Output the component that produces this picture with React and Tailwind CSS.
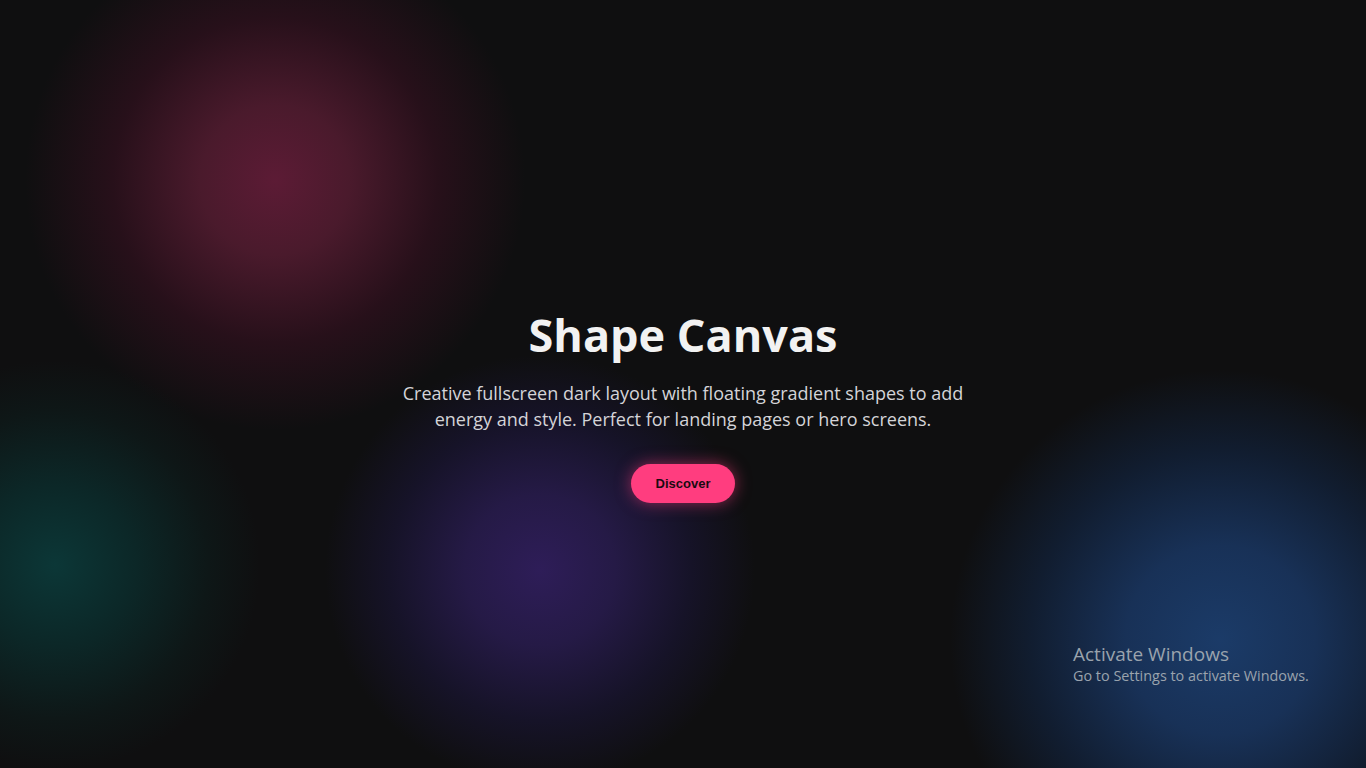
export default function App() {
  return (
    <div className="relative w-full h-screen overflow-hidden bg-[#0f0f10] font-['Open_Sans','Noto_Sans',sans-serif]">
      {/* floating gradient shapes */}
      <div className="absolute left-[25px] top-[-70px] w-[500px] h-[500px] rounded-full bg-[radial-gradient(circle_closest-side,#5c1b35_0%,#4a1a2c_30%,#27101a_65%,transparent_100%)]" />
      <div className="absolute left-[-150px] top-[360px] w-[410px] h-[410px] rounded-full bg-[radial-gradient(circle_closest-side,#0c3737_0%,#0c2727_40%,#0e1717_75%,transparent_100%)]" />
      <div className="absolute left-[325px] top-[355px] w-[430px] h-[430px] rounded-full bg-[radial-gradient(circle_closest-side,#2e1d58_0%,#251a46_35%,#161328_70%,transparent_100%)]" />
      <div className="absolute left-[950px] top-[370px] w-[540px] h-[540px] rounded-full bg-[radial-gradient(circle_closest-side,#1b3b68_0%,#183157_35%,#111d30_70%,transparent_100%)]" />

      <main className="relative flex flex-col items-center pt-[305px] text-center">
        <h1 className="text-[45px] leading-[60px] font-bold text-[#f2f2f2]">Shape Canvas</h1>
        <p className="mt-[15px] w-[580px] text-[18px] leading-[26px] text-[#d4d4d8]">
          Creative fullscreen dark layout with floating gradient shapes to add energy and style. Perfect for landing pages or hero screens.
        </p>
        <button className="mt-[32px] h-[39px] w-[104px] rounded-full bg-[#ff3d7f] text-[13px] font-bold text-[#1a0a10] font-['Liberation_Sans',Arial,sans-serif] shadow-[0_0_16px_rgba(255,61,127,0.55)]">
          Discover
        </button>
      </main>

      <div className="absolute left-[1073px] top-[642px] text-[#9aa3ad]">
        <div className="text-[19px] leading-[24px]">Activate Windows</div>
        <div className="text-[14.4px] leading-[20px]">Go to Settings to activate Windows.</div>
      </div>
    </div>
  );
}
